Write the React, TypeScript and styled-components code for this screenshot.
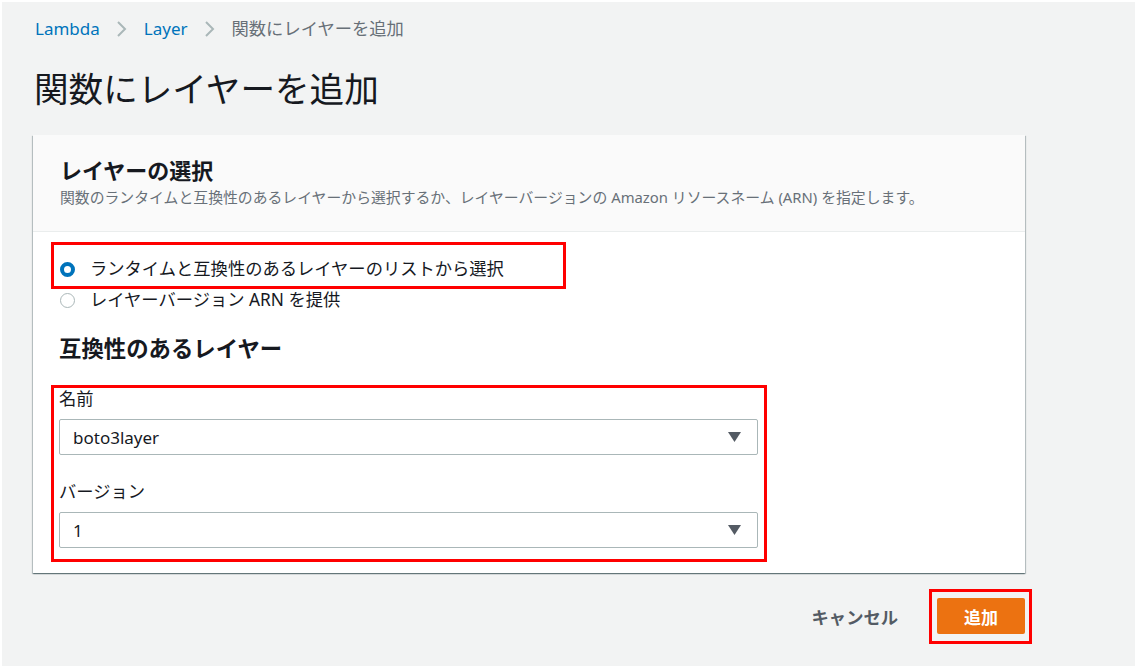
import React from "react";
import styled, { createGlobalStyle } from "styled-components";

const Global = createGlobalStyle`
  html, body { margin: 0; padding: 0; background: #ffffff; }
  body {
    font-family: "Noto Sans", "Noto Sans CJK JP", sans-serif;
    color: #16191f;
  }
  *, *::before, *::after { box-sizing: border-box; }
`;

const Page = styled.div`
  margin: 2px 5px 2px 2px;
  height: 664px;
  background: #f2f3f3;
  padding: 15px 0 0 31px;
`;

const Crumbs = styled.nav`
  display: flex;
  align-items: center;
  gap: 16px;
  height: 24px;
  padding-left: 2px;
  font-size: 17px;
  line-height: 24px;
`;

const CrumbLink = styled.span`
  color: #0073bb;
`;

const CrumbCurrent = styled.span`
  color: #687078;
  font-size: 17.3px;
`;

const Title = styled.h1`
  margin: 26px 0 0 0;
  padding-left: 1px;
  font-size: 34.6px;
  line-height: 44px;
  font-weight: 400;
  color: #16191f;
`;

const Card = styled.section`
  margin-top: 24px;
  width: 992px;
  background: #ffffff;
  box-shadow: 0 1px 1px 0 rgba(0, 28, 36, 0.35), 1px 1px 1px 0 rgba(0, 28, 36, 0.2),
    -1px 1px 1px 0 rgba(0, 28, 36, 0.2);
`;

const CardHeader = styled.header`
  background: #fafafa;
  border-bottom: 1px solid #eaeded;
  padding: 20px 27px 23px 27px;
`;

const CardTitle = styled.h2`
  margin: 0;
  font-size: 22px;
  line-height: 30px;
  font-weight: 700;
  color: #16191f;
`;

const CardDesc = styled.p`
  margin: 1px 0 0 0;
  font-size: 14.85px;
  line-height: 22px;
  color: #687078;
`;

const CardBody = styled.div`
  padding: 25px 26px 25px 26px;
`;

const RadioGroup = styled.div`
  display: flex;
  flex-direction: column;
  gap: 7px;
`;

const Annotated = styled.div<{ $t: number; $l: number; $w: number; $h: number }>`
  position: relative;
  &::after {
    content: "";
    position: absolute;
    top: ${(p) => p.$t}px;
    left: ${(p) => p.$l}px;
    width: ${(p) => p.$w}px;
    height: ${(p) => p.$h}px;
    border: 3px solid #ff0000;
    pointer-events: none;
  }
`;

const RadioRow = styled.label`
  display: flex;
  align-items: center;
  gap: 15px;
  height: 24px;
  padding-left: 1px;
  font-size: 17.3px;
  line-height: 24px;
  color: #16191f;
`;

const RadioDot = styled.span<{ $checked?: boolean }>`
  width: 15px;
  height: 15px;
  border-radius: 50%;
  flex: none;
  background: #ffffff;
  border: ${(p) => (p.$checked ? "4.5px solid #0073bb" : "1.5px solid #aab7b8")};
`;

const SectionTitle = styled.h3`
  margin: 22px 0 0 0;
  font-size: 22.4px;
  line-height: 30px;
  font-weight: 700;
  color: #16191f;
`;

const Fields = styled.div`
  margin-top: 23px;
  display: flex;
  flex-direction: column;
  gap: 25px;
  width: 699px;
`;

const Field = styled.div`
  display: flex;
  flex-direction: column;
  gap: 8px;
`;

const FieldLabel = styled.div`
  font-size: 17.3px;
  line-height: 24px;
  color: #16191f;
`;

const Select = styled.div`
  display: flex;
  align-items: center;
  justify-content: space-between;
  height: 36px;
  padding: 0 16px 0 13px;
  border: 1px solid #aab7b8;
  border-radius: 2px;
  background: #ffffff;
  font-size: 17px;
  color: #16191f;
`;

const Actions = styled.div`
  width: 992px;
  margin-top: 25px;
  display: flex;
  justify-content: flex-end;
  align-items: center;
  gap: 19px;
`;

const CancelButton = styled.button`
  border: none;
  background: transparent;
  padding: 0 20px;
  height: 36px;
  font-family: inherit;
  font-size: 17.3px;
  font-weight: 700;
  color: #545b64;
`;

const PrimaryButton = styled.button`
  border: none;
  border-radius: 2px;
  background: #ec7211;
  width: 88px;
  height: 36px;
  font-family: inherit;
  font-size: 17px;
  font-weight: 700;
  color: #ffffff;
`;

const Chevron = () => (
  <svg width="12" height="18" viewBox="0 0 12 18" aria-hidden>
    <polyline points="2,2 9,9 2,16" fill="none" stroke="#aab7b8" strokeWidth="2" />
  </svg>
);

const Caret = () => (
  <svg width="13" height="10" viewBox="0 0 13 10" aria-hidden>
    <polygon points="0,0 13,0 6.5,10" fill="#545b64" />
  </svg>
);

export default function App() {
  return (
    <>
      <Global />
      <Page>
        <Crumbs>
          <CrumbLink>Lambda</CrumbLink>
          <Chevron />
          <CrumbLink>Layer</CrumbLink>
          <Chevron />
          <CrumbCurrent>関数にレイヤーを追加</CrumbCurrent>
        </Crumbs>
        <Title>関数にレイヤーを追加</Title>
        <Card>
          <CardHeader>
            <CardTitle>レイヤーの選択</CardTitle>
            <CardDesc>
              関数のランタイムと互換性のあるレイヤーから選択するか、レイヤーバージョンの Amazon リソースネーム (ARN) を指定します。
            </CardDesc>
          </CardHeader>
          <CardBody>
            <RadioGroup>
              <Annotated $t={-15} $l={-8} $w={515} $h={47}>
                <RadioRow>
                  <RadioDot $checked />
                  ランタイムと互換性のあるレイヤーのリストから選択
                </RadioRow>
              </Annotated>
              <RadioRow>
                <RadioDot />
                レイヤーバージョン ARN を提供
              </RadioRow>
            </RadioGroup>
            <SectionTitle>互換性のあるレイヤー</SectionTitle>
            <Annotated $t={-2} $l={-8} $w={716} $h={177}>
              <Fields>
                <Field>
                  <FieldLabel>名前</FieldLabel>
                  <Select>
                    <span>boto3layer</span>
                    <Caret />
                  </Select>
                </Field>
                <Field>
                  <FieldLabel>バージョン</FieldLabel>
                  <Select>
                    <span>1</span>
                    <Caret />
                  </Select>
                </Field>
              </Fields>
            </Annotated>
          </CardBody>
        </Card>
        <Actions>
          <CancelButton>キャンセル</CancelButton>
          <Annotated $t={-9} $l={-8} $w={103} $h={55}>
            <PrimaryButton>追加</PrimaryButton>
          </Annotated>
        </Actions>
      </Page>
    </>
  );
}
